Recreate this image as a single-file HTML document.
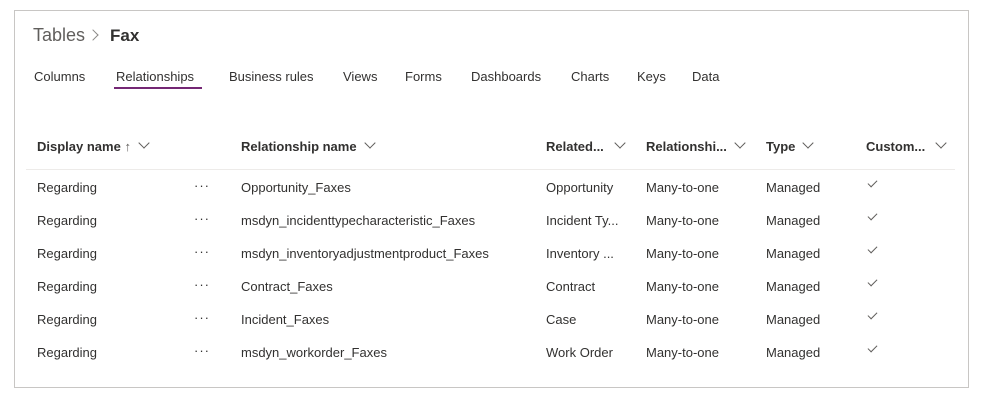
<!DOCTYPE html>
<html><head><style>
body{margin:0;width:984px;height:400px;background:#fff;font-family:"Liberation Sans",sans-serif;color:#323130;position:relative;overflow:hidden}
.box{position:absolute;left:14px;top:10px;width:953px;height:376px;border:1px solid #c8c6c4}
.a{position:absolute;white-space:nowrap;line-height:16px}
.t{font-size:13px}
.h{font-size:13px;font-weight:bold;color:#323130}
.chev{display:inline-block;width:7px;height:7px;border-right:1px solid #605e5c;border-bottom:1px solid #605e5c;transform:rotate(45deg);margin-left:9px;position:relative;top:-4px}
.chk{position:absolute;width:4px;height:8px;border-right:1px solid #605e5c;border-bottom:1px solid #605e5c;transform:rotate(45deg)}
</style></head><body>
<div class="box"></div>
<div class="a" style="left:33px;top:25px;font-size:18px;line-height:20px;color:#605e5c">Tables</div>
<div style="position:absolute;left:89px;top:31px;width:7px;height:7px;border-right:1px solid #8a8886;border-top:1px solid #8a8886;transform:rotate(45deg)"></div>
<div class="a" style="left:110px;top:26px;font-size:17px;line-height:20px;font-weight:bold;color:#323130">Fax</div>
<div class="a t" style="left:34px;top:69px">Columns</div>
<div class="a t" style="left:116px;top:69px">Relationships</div>
<div style="position:absolute;left:114px;top:87px;width:88px;height:2px;background:#742774"></div>
<div class="a t" style="left:229px;top:69px">Business rules</div>
<div class="a t" style="left:343px;top:69px">Views</div>
<div class="a t" style="left:405px;top:69px">Forms</div>
<div class="a t" style="left:471px;top:69px">Dashboards</div>
<div class="a t" style="left:571px;top:69px">Charts</div>
<div class="a t" style="left:637px;top:69px">Keys</div>
<div class="a t" style="left:692px;top:69px">Data</div>

<div class="a h" style="left:37px;top:139px">Display name <span style="font-weight:normal;color:#605e5c">↑</span><span class="chev"></span></div>
<div class="a h" style="left:241px;top:139px">Relationship name<span class="chev"></span></div>
<div class="a h" style="left:546px;top:139px">Related...<span class="chev" style="margin-left:12px"></span></div>
<div class="a h" style="left:646px;top:139px">Relationshi...<span class="chev"></span></div>
<div class="a h" style="left:766px;top:139px">Type<span class="chev"></span></div>
<div class="a h" style="left:866px;top:139px">Custom...<span class="chev" style="margin-left:12px"></span></div>
<div style="position:absolute;left:26px;top:169px;width:929px;height:1px;background:#edebe9"></div>

<div id="rows"></div>
<script>
var d=[["Opportunity_Faxes","Opportunity"],["msdyn_incidenttypecharacteristic_Faxes","Incident Ty..."],["msdyn_inventoryadjustmentproduct_Faxes","Inventory ..."],["Contract_Faxes","Contract"],["Incident_Faxes","Case"],["msdyn_workorder_Faxes","Work Order"]];
var h="";
d.forEach(function(r,i){var y=180+i*33;
h+='<div class="a t" style="left:37px;top:'+y+'px">Regarding</div>'+
'<div class="a t" style="left:194px;top:'+(y-2)+'px;letter-spacing:1px">···</div>'+
'<div class="a t" style="left:241px;top:'+y+'px">'+r[0]+'</div>'+
'<div class="a t" style="left:546px;top:'+y+'px">'+r[1]+'</div>'+
'<div class="a t" style="left:646px;top:'+y+'px">Many-to-one</div>'+
'<div class="a t" style="left:766px;top:'+y+'px">Managed</div>'+
'<div class="chk" style="left:870px;top:'+(y-2)+'px"></div>';});
document.getElementById("rows").innerHTML=h;
</script>
</body></html>
